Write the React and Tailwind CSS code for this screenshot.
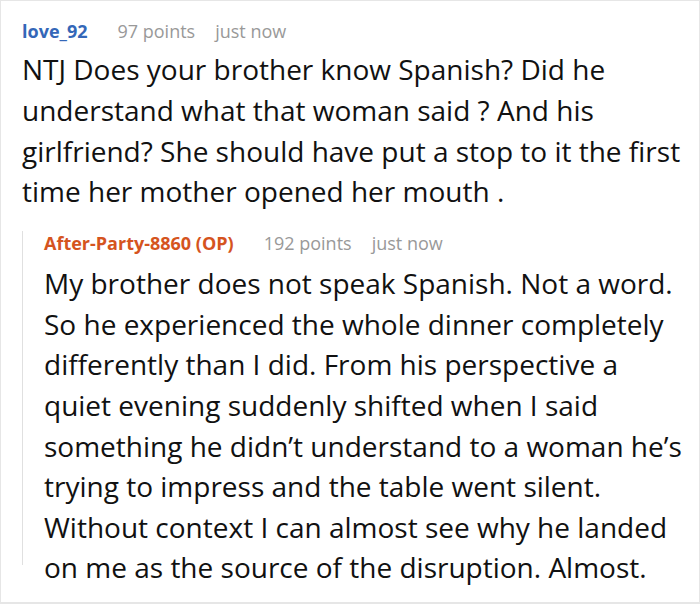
const font = { fontFamily: '"Open Sans", "Noto Sans", sans-serif' };

function CommentHeader({ author, authorClass, points, time }) {
  return (
    <div className="flex items-center text-[18px] leading-[24px]">
      <span className={`font-bold ${authorClass}`}>{author}</span>
      <span className="ml-[30px] text-[#999999]">{points} points</span>
      <span className="ml-[20px] text-[#999999]">{time}</span>
    </div>
  );
}

export default function App() {
  return (
    <div
      className="h-[604px] w-[700px] overflow-hidden border border-b-2 border-[#e6e6e6] bg-white"
      style={font}
    >
      <div className="pl-[21px] pt-[18px]">
        <CommentHeader author="love_92" authorClass="text-[#3467b8]" points="97" time="just now" />
        <p className="mt-[6px] pr-[10px] text-[28px] leading-[40.8px] text-[#111111]">
          NTJ Does your brother know Spanish? Did he understand what that woman said ? And his
          girlfriend? She should have put a stop to it the first time her mother opened her mouth .
        </p>

        {/* Reply */}
        <div className="mt-[19px] h-[334px] border-l border-[#e0e0e0] pl-[21px]">
          <div className="mt-[1px]">
            <CommentHeader
              author="After-Party-8860 (OP)"
              authorClass="text-[#d5541e]"
              points="192"
              time="just now"
            />
          </div>
          <p className="mt-[8px] pr-[8px] text-[28px] leading-[40.6px] text-[#111111]">
            My brother does not speak Spanish. Not a word. So he experienced the whole dinner
            completely differently than I did. From his perspective a quiet evening suddenly
            shifted when I said something he didn’t understand to a woman he’s trying to impress
            and the table went silent. Without context I can almost see why he landed on me as the
            source of the disruption. Almost.
          </p>
        </div>
      </div>
    </div>
  );
}
